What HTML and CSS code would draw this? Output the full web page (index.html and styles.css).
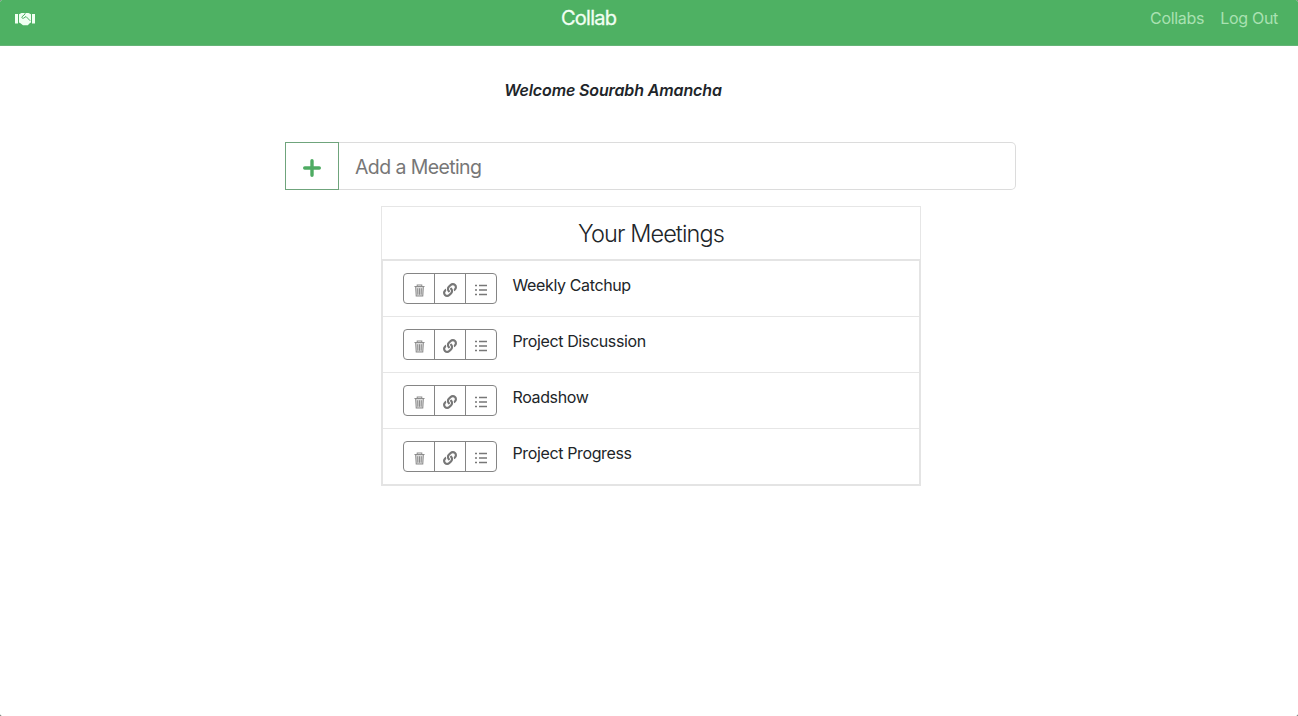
FILE: index.html
```html
<!DOCTYPE html>
<html lang="en">
<head>
<meta charset="utf-8">
<title>Collab</title>
<link rel="stylesheet" href="styles.css">
</head>
<body>
<svg class="sprite" aria-hidden="true">
  <symbol id="trash" viewBox="0 0 12 14"><path fill="currentColor" fill-opacity=".3" d="M1.8 3h8.4l-.6 10H2.4z"/><path fill="none" stroke="currentColor" stroke-width="1.1" d="M.5 2.6h11M3.5 2.5V1h5v1.5M1.8 3l.6 10h7.2l.6-10M4 4.5l.2 7M6 4.5v7M8 4.5l-.2 7"/></symbol>
  <symbol id="link" viewBox="0 0 512 512"><path fill="currentColor" d="M326.612 185.391c59.747 59.809 58.927 155.698.36 214.59-.11.12-.24.25-.36.37l-67.2 67.2c-59.27 59.27-155.699 59.262-214.96 0-59.27-59.26-59.27-155.7 0-214.96l37.106-37.106c9.84-9.84 26.786-3.3 27.294 10.606.648 17.722 3.826 35.527 9.69 52.721 1.986 5.822.567 12.262-3.783 16.612l-13.087 13.087c-28.026 28.026-28.905 73.66-1.155 101.96 28.024 28.579 74.086 28.749 102.325.51l67.2-67.19c28.191-28.191 28.073-73.757 0-101.83-3.701-3.694-7.429-6.564-10.341-8.569a16.037 16.037 0 0 1-6.947-12.606c-.396-10.567 3.348-21.456 11.698-29.806l21.054-21.055c5.521-5.521 14.182-6.199 20.584-1.731a152.482 152.482 0 0 1 20.522 17.197zM467.547 44.449c-59.261-59.262-155.69-59.27-214.96 0l-67.2 67.2c-.12.12-.25.25-.36.37-58.566 58.892-59.387 154.781.36 214.59a152.454 152.454 0 0 0 20.521 17.196c6.402 4.468 15.064 3.789 20.584-1.731l21.054-21.055c8.35-8.35 12.094-19.239 11.698-29.806a16.037 16.037 0 0 0-6.947-12.606c-2.912-2.005-6.64-4.875-10.341-8.569-28.073-28.073-28.191-73.639 0-101.83l67.2-67.19c28.239-28.239 74.3-28.069 102.325.51 27.75 28.3 26.872 73.934-1.155 101.96l-13.087 13.087c-4.35 4.35-5.769 10.79-3.783 16.612 5.864 17.194 9.042 34.999 9.69 52.721.509 13.906 17.454 20.446 27.294 10.606l37.106-37.106c59.271-59.259 59.271-155.699.001-214.959z"/></symbol>
  <symbol id="list" viewBox="0 0 12 12"><path fill="none" stroke="currentColor" stroke-width="1.5" d="M0 1.5h2M4 1.5h8M0 6h2M4 6h8M0 10.5h2M4 10.5h8"/></symbol>
</svg>
<header class="navbar">
  <svg class="brand" viewBox="0 0 20 14"><path fill="currentColor" d="M0 2h3v9.5H0zM17 2h3v9.5h-3zM4 2.2 6.5 1h2.2l1.3.6 1.3-.6h2.2L16 2.2v8.6h-.8l-2.4 2.4H8L4.8 10.8H4z"/><path fill="none" stroke="#4eb163" stroke-width="1" d="M10.3 1.8 7 4.8c-.5 1 .6 2 1.6 1.4l2.4-1.7 4.2 4.3"/></svg>
  <div class="title">Collab</div>
  <nav class="links"><span class="collabs">Collabs</span><span class="logout">Log Out</span></nav>
</header>
<main class="page">
  <p class="welcome">Welcome Sourabh Amancha</p>
  <div class="add">
    <div class="plus"><svg viewBox="0 0 18 18"><path stroke="currentColor" stroke-width="3.4" stroke-linecap="round" d="M9 1.7v14.6M1.7 9h14.6"/></svg></div>
    <div class="field"><span>Add a Meeting</span></div>
  </div>
  <section class="card">
    <h1 class="heading"><span>Your Meetings</span></h1>
    <ul class="meetings">
      <li><div class="tools"><i><svg class="trash"><use href="#trash"/></svg></i><i><svg class="link"><use href="#link"/></svg></i><i><svg class="list"><use href="#list"/></svg></i></div><span class="name">Weekly Catchup</span></li>
      <li><div class="tools"><i><svg class="trash"><use href="#trash"/></svg></i><i><svg class="link"><use href="#link"/></svg></i><i><svg class="list"><use href="#list"/></svg></i></div><span class="name">Project Discussion</span></li>
      <li><div class="tools"><i><svg class="trash"><use href="#trash"/></svg></i><i><svg class="link"><use href="#link"/></svg></i><i><svg class="list"><use href="#list"/></svg></i></div><span class="name">Roadshow</span></li>
      <li><div class="tools"><i><svg class="trash"><use href="#trash"/></svg></i><i><svg class="link"><use href="#link"/></svg></i><i><svg class="list"><use href="#list"/></svg></i></div><span class="name">Project Progress</span></li>
    </ul>
  </section>
</main>
</body>
</html>
```
FILE: styles.css
```css
* { box-sizing: border-box; }
html { background: #4a5a4d; }
body { margin: 0; background: #fff; color: #212529; font: 16px/24px Inter, "Liberation Sans", sans-serif; height: 716px; overflow: hidden; border-radius: 2px; }
.sprite { display: none; }
svg { display: block; }
.navbar { height: 46px; background: #4eb163; border-bottom: 1px solid #65b477; display: grid; grid-template-columns: 546px 1fr 545px; padding: 0 20px 0 15px; color: #fff; border-radius: 2px 2px 0 0; }
.brand { width: 20px; height: 14px; margin-top: 12px; color: #f0fff2; }
.title { font-size: 20px; line-height: 24px; margin-top: 6px; letter-spacing: -0.75px; color: #f1fff3; -webkit-text-stroke: .3px; }
.links { display: flex; justify-content: flex-end; gap: 16px; margin-top: 6px; color: #a9e1b2; letter-spacing: -0.3px; }
.page { display: flex; flex-direction: column; align-items: center; }
.welcome { margin: 32px 72px 0 0; font-weight: 600; font-style: italic; white-space: nowrap; letter-spacing: -0.13px; }
.add { display: flex; width: 731px; height: 48px; margin: 40px 0 0 3px; }
.plus { width: 54px; border: 1px solid #6fa47c; color: #4eab62; display: grid; place-items: center; }
.plus svg { width: 18px; height: 18px; margin-top: 4px; }
.field { flex: 1; border: 1px solid #dcdcdc; border-left: 0; border-radius: 0 5px 5px 0; padding: 9px 16px; font-size: 19.5px; line-height: 30px; letter-spacing: -0.6px; color: #777; }
.card { width: 540px; margin: 16px 0 0 4px; }
.heading { height: 53px; margin: 0; border: 1px solid #e6e6e6; border-bottom: 0; font-size: 23.5px; line-height: 54px; font-weight: 300; text-align: center; letter-spacing: -0.9px; }
.meetings { list-style: none; margin: 0; padding: 0; border: 2px solid #e4e4e4; }
.meetings li { height: 56px; display: flex; padding: 12px 20px 0; border-bottom: 1px solid #e6e6e6; }
.meetings li:last-child { border-bottom: 0; height: 55px; }
.tools { width: 94px; height: 31px; display: flex; border: 1px solid #858585; border-radius: 4px; color: #777; margin-right: 15.5px; }
.tools i { flex: 1; display: grid; place-items: center; padding-top: 3px; }
.tools i + i { border-left: 1px solid #858585; }
.trash { width: 11px; height: 13px; color: #8c8c8c; }
.link { width: 14px; height: 14px; }
.list { width: 12px; height: 12px; }
.name { letter-spacing: -0.37px; }
```
